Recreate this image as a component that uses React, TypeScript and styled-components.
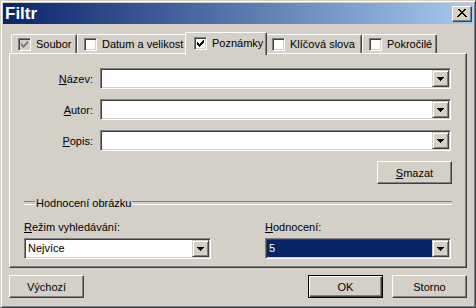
import React from 'react'
import styled, { createGlobalStyle, css } from 'styled-components'

const face = '#D4D0C8'
const shadow = '#808080'
const dark = '#404040'
const hi = '#FFFFFF'
const navy = '#0A246A'

const GlobalStyle = createGlobalStyle`
  html, body {
    margin: 0;
    padding: 0;
    background: ${face};
  }
  body {
    font-family: 'Liberation Sans', Arial, sans-serif;
    font-size: 11px;
    color: #000;
  }
  * {
    box-sizing: border-box;
  }
`

const raised = css`
  border: 1px solid;
  border-color: ${hi} ${dark} ${dark} ${hi};
  box-shadow: inset -1px -1px ${shadow};
`

const sunken = css`
  border: 1px solid;
  border-color: ${shadow} ${hi} ${hi} ${shadow};
  box-shadow: inset 1px 1px ${dark}, inset -1px -1px ${face};
`

const Window = styled.div`
  width: 476px;
  height: 308px;
  background: ${face};
  border: 1px solid;
  border-color: ${face} ${dark} ${dark} ${face};
  box-shadow: inset 1px 1px ${hi}, inset -1px -1px ${shadow};
  padding: 2px;
  display: flex;
  flex-direction: column;
`

const TitleBar = styled.div`
  height: 21px;
  display: flex;
  align-items: center;
  justify-content: space-between;
  padding: 0 1px 0 2px;
  background: linear-gradient(to right, ${navy}, #a6caf0);
`

const Title = styled.span`
  color: #fff;
  font-weight: bold;
  font-size: 17px;
  line-height: 21px;
`

const CloseButton = styled.div`
  width: 20px;
  height: 16px;
  background: ${face};
  ${raised};
  display: flex;
  align-items: center;
  justify-content: center;
`

const Body = styled.div`
  flex: 1;
  padding: 8px 6px 0 6px;
  display: flex;
  flex-direction: column;
`

const TabRow = styled.div`
  display: flex;
  align-items: flex-end;
  height: 21px;
  padding-left: 2px;
  position: relative;
  z-index: 1;
`

const Tab = styled.div<{ $active?: boolean; $w: number }>`
  display: flex;
  align-items: center;
  gap: 5px;
  flex: none;
  width: ${(p) => p.$w}px;
  height: ${(p) => (p.$active ? 23 : 19)}px;
  padding-left: ${(p) => (p.$active ? 8 : 6)}px;
  padding-bottom: ${(p) => (p.$active ? 2 : 0)}px;
  margin: 0 ${(p) => (p.$active ? -2 : 0)}px ${(p) => (p.$active ? -2 : 0)}px;
  background: ${face};
  border-top: 1px solid ${hi};
  border-left: 1px solid ${hi};
  border-right: 1px solid ${dark};
  box-shadow: inset -1px 0 ${shadow};
  border-top-left-radius: 2px;
  border-top-right-radius: 2px;
  position: relative;
  z-index: ${(p) => (p.$active ? 2 : 1)};
  white-space: nowrap;
`

const Box = styled.span<{ $disabled?: boolean }>`
  width: 13px;
  height: 13px;
  flex: none;
  ${sunken};
  background: ${(p) => (p.$disabled ? face : '#fff')};
  display: flex;
  align-items: center;
  justify-content: center;
`

const Panel = styled.div`
  border: 1px solid;
  border-color: ${hi} ${dark} ${dark} ${hi};
  box-shadow: inset -1px -1px ${shadow};
  padding: 14px 14px 8px 14px;
`

const FormGrid = styled.div`
  display: grid;
  grid-template-columns: 69px 351px;
  column-gap: 7px;
  row-gap: 10px;
  align-items: center;
`

const FieldLabel = styled.label`
  text-align: right;
  white-space: nowrap;
`

const ButtonRow = styled.div<{ $top: number }>`
  display: flex;
  align-items: center;
  gap: 9px;
  margin-top: ${(p) => p.$top}px;
`

const Spacer = styled.div`
  flex: 1;
`

const Button = styled.div<{ $default?: boolean }>`
  width: 75px;
  height: 23px;
  flex: none;
  display: flex;
  align-items: center;
  justify-content: center;
  background: ${face};
  ${(p) =>
    p.$default
      ? css`
          border: 1px solid #000;
          box-shadow: inset 1px 1px ${hi}, inset -1px -1px ${dark},
            inset -2px -2px ${shadow};
        `
      : raised};
`

const GroupHeader = styled.div`
  display: flex;
  align-items: center;
  height: 13px;
  margin-top: 12px;
  &::before,
  &::after {
    content: '';
    height: 2px;
    border-top: 1px solid ${shadow};
    border-bottom: 1px solid ${hi};
  }
  &::before {
    width: 11px;
  }
  &::after {
    flex: 1;
  }
`

const GroupTitle = styled.span`
  padding: 0 1px;
`

const FieldGrid = styled.div`
  display: grid;
  grid-template-columns: 187px 186px;
  column-gap: 54px;
  margin-top: 12px;
`

const Field = styled.div`
  display: flex;
  flex-direction: column;
  gap: 4px;
  line-height: 13px;
`

const ComboBox = styled.div`
  height: 21px;
  display: flex;
  padding: 1px;
  background: #fff;
  ${sunken};
`

const ComboText = styled.div<{ $focused?: boolean }>`
  flex: 1;
  line-height: 17px;
  padding-left: 2px;
  background: ${(p) => (p.$focused ? navy : '#fff')};
  color: ${(p) => (p.$focused ? '#fff' : '#000')};
`

const DropButton = styled.div`
  width: 17px;
  height: 17px;
  flex: none;
  background: ${face};
  border: 1px solid;
  border-color: ${face} ${dark} ${dark} ${face};
  box-shadow: inset 1px 1px ${hi}, inset -1px -1px ${shadow};
  display: flex;
  align-items: center;
  justify-content: center;
`

const CheckMark = ({ color }: { color: string }) => (
  <svg width="7" height="7" viewBox="0 0 7 7" shapeRendering="crispEdges">
    <path
      fill={color}
      d="M6 0h1v1h-1zM5 1h2v1h-2zM0 2h1v1h-1zM4 2h3v1h-3zM0 3h2v1h-2zM3 3h3v1h-3zM0 4h5v1h-5zM1 5h3v1h-3zM2 6h1v1h-1z"
    />
  </svg>
)

const Arrow = () => (
  <svg width="7" height="4" viewBox="0 0 7 4" shapeRendering="crispEdges">
    <path d="M0 0h7v1h-7zM1 1h5v1h-5zM2 2h3v1h-3zM3 3h1v1h-1z" fill="#000" />
  </svg>
)

const CloseGlyph = () => (
  <svg width="10" height="9" viewBox="0 0 10 9" shapeRendering="crispEdges">
    <path
      fill="#000"
      d="M1 0h2v1h-2zM7 0h2v1h-2zM2 1h2v1h-2zM6 1h2v1h-2zM3 2h4v1h-4zM4 3h2v1h-2zM3 4h4v1h-4zM2 5h2v1h-2zM6 5h2v1h-2zM1 6h2v1h-2zM7 6h2v1h-2zM0 7h2v1h-2zM8 7h2v1h-2z"
    />
  </svg>
)

const Combo = ({ value, focused }: { value?: string; focused?: boolean }) => (
  <ComboBox>
    <ComboText $focused={focused}>{value}</ComboText>
    <DropButton>
      <Arrow />
    </DropButton>
  </ComboBox>
)

const tabs = [
  { label: 'Soubor', w: 66, checked: true, disabled: true },
  { label: 'Datum a velikost', w: 110 },
  { label: 'Poznámky', w: 82, checked: true, active: true },
  { label: 'Klíčová slova', w: 97 },
  { label: 'Pokročilé', w: 75 },
]

export default function App() {
  return (
    <>
      <GlobalStyle />
      <Window>
        <TitleBar>
          <Title>Filtr</Title>
          <CloseButton>
            <CloseGlyph />
          </CloseButton>
        </TitleBar>
        <Body>
          <TabRow>
            {tabs.map((t) => (
              <Tab key={t.label} $w={t.w} $active={t.active}>
                <Box $disabled={t.disabled}>
                  {t.checked && <CheckMark color={t.disabled ? shadow : '#000'} />}
                </Box>
                {t.label}
              </Tab>
            ))}
          </TabRow>
          <Panel>
            <FormGrid>
              <FieldLabel>
                <u>N</u>ázev:
              </FieldLabel>
              <Combo />
              <FieldLabel>
                <u>A</u>utor:
              </FieldLabel>
              <Combo />
              <FieldLabel>
                <u>P</u>opis:
              </FieldLabel>
              <Combo />
            </FormGrid>
            <ButtonRow $top={10}>
              <Spacer />
              <Button>
                <span>
                  <u>S</u>mazat
                </span>
              </Button>
            </ButtonRow>
            <GroupHeader>
              <GroupTitle>Hodnocení obrázku</GroupTitle>
            </GroupHeader>
            <FieldGrid>
              <Field>
                <label>
                  <u>R</u>ežim vyhledávání:
                </label>
                <Combo value="Nejvíce" />
              </Field>
              <Field>
                <label>
                  <u>H</u>odnocení:
                </label>
                <Combo value="5" focused />
              </Field>
            </FieldGrid>
          </Panel>
          <ButtonRow $top={7}>
            <Button>Výchozí</Button>
            <Spacer />
            <Button $default>OK</Button>
            <Button>Storno</Button>
          </ButtonRow>
        </Body>
      </Window>
    </>
  )
}
